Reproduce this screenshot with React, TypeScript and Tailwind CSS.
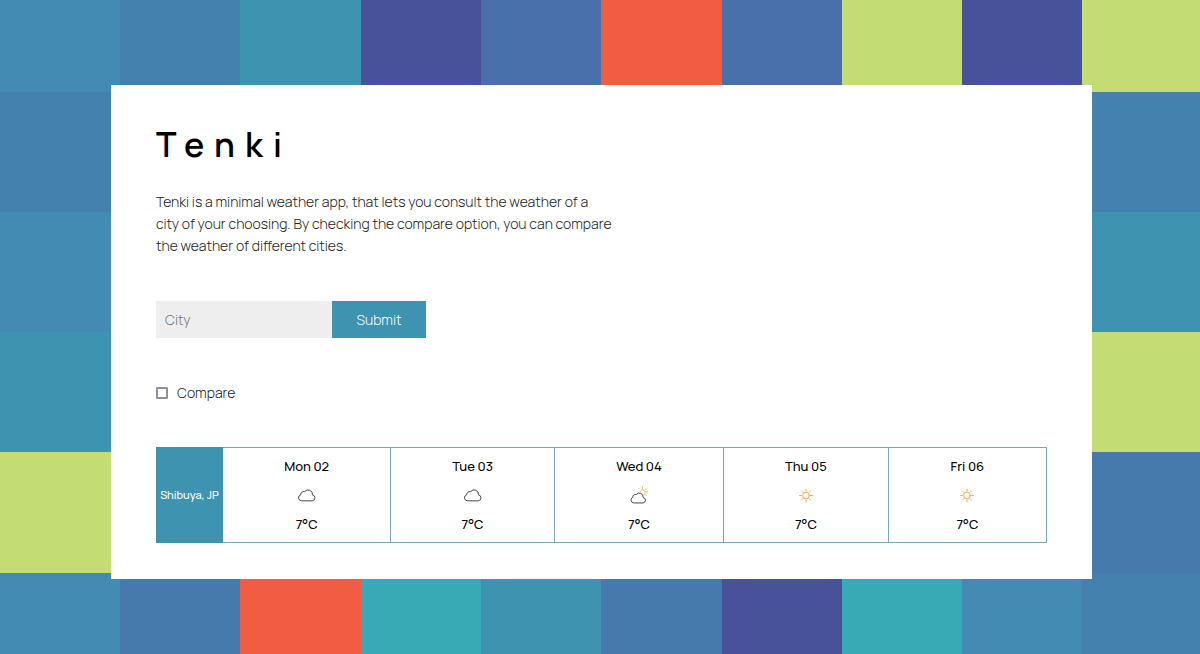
import type { ReactNode } from "react";

const tiles = [
  "bg-[#438bb3]", "bg-[#4481af]", "bg-[#3e93b1]", "bg-[#47529b]", "bg-[#4a70ab]",
  "bg-[#f05d42]", "bg-[#4a70ab]", "bg-[#c3dd74]", "bg-[#47529b]", "bg-[#c3dd74]",

  "bg-[#4481af]", "bg-[#3e93b1]", "bg-[#47529b]", "bg-[#4a70ab]", "bg-[#438bb3]",
  "bg-[#38aab6]", "bg-[#4679ac]", "bg-[#f05d42]", "bg-[#438bb3]", "bg-[#4481af]",

  "bg-[#438bb3]", "bg-[#4679ac]", "bg-[#38aab6]", "bg-[#c3dd74]", "bg-[#4481af]",
  "bg-[#47529b]", "bg-[#3e93b1]", "bg-[#438bb3]", "bg-[#4679ac]", "bg-[#3e93b1]",

  "bg-[#3e93b1]", "bg-[#f05d42]", "bg-[#438bb3]", "bg-[#4481af]", "bg-[#38aab6]",
  "bg-[#4679ac]", "bg-[#c3dd74]", "bg-[#47529b]", "bg-[#438bb3]", "bg-[#c3dd74]",

  "bg-[#c3dd74]", "bg-[#438bb3]", "bg-[#4481af]", "bg-[#4679ac]", "bg-[#47529b]",
  "bg-[#3e93b1]", "bg-[#438bb3]", "bg-[#38aab6]", "bg-[#f05d42]", "bg-[#4679ac]",

  "bg-[#438bb3]", "bg-[#4679ac]", "bg-[#f05d42]", "bg-[#38aab6]", "bg-[#3e93b1]",
  "bg-[#4679ac]", "bg-[#47529b]", "bg-[#38aab6]", "bg-[#438bb3]", "bg-[#4481af]",
];

function Mosaic() {
  return (
    <div
      aria-hidden="true"
      className="col-start-1 row-start-1 -mr-[2px] grid grid-cols-[120fr_120fr_121fr_120fr_120fr_121fr_120fr_120fr_120fr_120fr] grid-rows-[92px_120px_120px_120px_121px_1fr]"
    >
      {tiles.map((tile, i) => (
        <div key={i} className={tile} />
      ))}
    </div>
  );
}

function Icon({ label, children }: { label: string; children: ReactNode }) {
  return (
    <svg
      role="img"
      aria-label={label}
      viewBox="0 0 20 20"
      fill="none"
      strokeLinecap="round"
      strokeLinejoin="round"
      className="mx-auto block size-5"
    >
      {children}
    </svg>
  );
}

function Cloud() {
  return (
    <Icon label="Cloudy">
      <path
        d="M4.4 15.8a3 3 0 0 1-.7-5.9 3.2 3.2 0 0 1 4-3.3 4.4 4.4 0 0 1 7.8 3.3 3 3 0 0 1 .1 5.9Z"
        stroke="#333"
        strokeWidth="0.9"
      />
    </Icon>
  );
}

function CloudSun() {
  return (
    <Icon label="Partly cloudy">
      <path
        d="M11.2 6.6a2.6 2.6 0 1 1 4 2.9M13.6 1.7v1.6M9.8 3.3l1 1M17.4 3.3l-1 1M16.8 6.9h1.7M16 9.4l1.2 1.2"
        stroke="#f3ac52"
        strokeWidth="0.9"
      />
      <path
        d="M4.4 17.9a2.9 2.9 0 0 1-.7-5.5 2.8 2.8 0 0 1 3.5-2.9 4 4 0 0 1 7 3.1 2.7 2.7 0 0 1 .2 5.3Z"
        stroke="#333"
        strokeWidth="0.9"
      />
    </Icon>
  );
}

function Sun() {
  return (
    <Icon label="Sunny">
      <circle cx="10" cy="10.5" r="3.4" stroke="#f3a545" strokeWidth="1" />
      <path
        d="M10 4.1v1.7M10 15.2v1.7M3.6 10.5h1.7M14.7 10.5h1.7M5.5 6l1.2 1.2M13.3 13.8l1.2 1.2M5.5 15l1.2-1.2M13.3 7.2L14.5 6"
        stroke="#f3a545"
        strokeWidth="1"
      />
    </Icon>
  );
}

const days = [
  { name: "Mon 02", icon: <Cloud />, temp: "7°C" },
  { name: "Tue 03", icon: <Cloud />, temp: "7°C" },
  { name: "Wed 04", icon: <CloudSun />, temp: "7°C" },
  { name: "Thu 05", icon: <Sun />, temp: "7°C" },
  { name: "Fri 06", icon: <Sun />, temp: "7°C" },
];

export default function App() {
  return (
    <div className="grid min-h-screen grid-cols-[minmax(0,1fr)] overflow-hidden font-['Manrope','Inter',sans-serif]">
      <Mosaic />
      <div className="z-10 col-start-1 row-start-1 pt-[85px] pr-[108px] pb-[75px] pl-[111px]">
        <main className="bg-white px-[45px] pt-[35px] pb-9 text-black">
          <h1 className="text-[34px] leading-[48px] font-semibold tracking-[0.3em]">Tenki</h1>
          <p className="mt-[23px] text-[14px] leading-[22px] font-light text-[#222]">
            Tenki is a minimal weather app, that lets you consult the weather of a{" "}
            <br className="hidden md:inline" />
            city of your choosing. By checking the compare option, you can compare{" "}
            <br className="hidden md:inline" />
            the weather of different cities.
          </p>
          <form onSubmit={(e) => e.preventDefault()}>
            <div className="mt-11 flex h-[37px]">
              <input
                type="text"
                aria-label="City"
                placeholder="City"
                className="w-44 bg-[#eee] px-[9px] text-[14px] font-light outline-none placeholder:text-[#757575]"
              />
              <button type="submit" className="w-[94px] bg-[#3e93b1] text-[14px] font-light text-white">
                Submit
              </button>
            </div>
            <div className="mt-11 flex items-center gap-[9px]">
              <input
                id="compare"
                type="checkbox"
                className="size-3 appearance-none rounded-[1px] border-2 border-[#8f8f9d] bg-white checked:bg-[#3e93b1]"
              />
              <label htmlFor="compare" className="text-[14px] leading-[22px] font-light text-[#222]">
                Compare
              </label>
            </div>
          </form>
          <table className="mt-[43px] w-full table-fixed border-collapse text-center">
            <colgroup>
              <col className="w-[66px]" />
              <col className="w-[18.9%]" />
              <col className="w-[18.4%]" />
              <col className="w-[19%]" />
              <col className="w-[18.5%]" />
              <col />
            </colgroup>
            <tbody>
              <tr>
                <th
                  scope="row"
                  className="border border-[#3e93b1] bg-[#3e93b1] p-0 text-[11px] font-medium whitespace-nowrap text-white"
                >
                  Shibuya, JP
                </th>
                {days.map((day) => (
                  <td key={day.name} className="border border-[#7ba5bb] py-2 text-[13px] leading-5 font-medium">
                    <div>{day.name}</div>
                    <div className="py-[9px]">{day.icon}</div>
                    <div>{day.temp}</div>
                  </td>
                ))}
              </tr>
            </tbody>
          </table>
        </main>
      </div>
    </div>
  );
}
